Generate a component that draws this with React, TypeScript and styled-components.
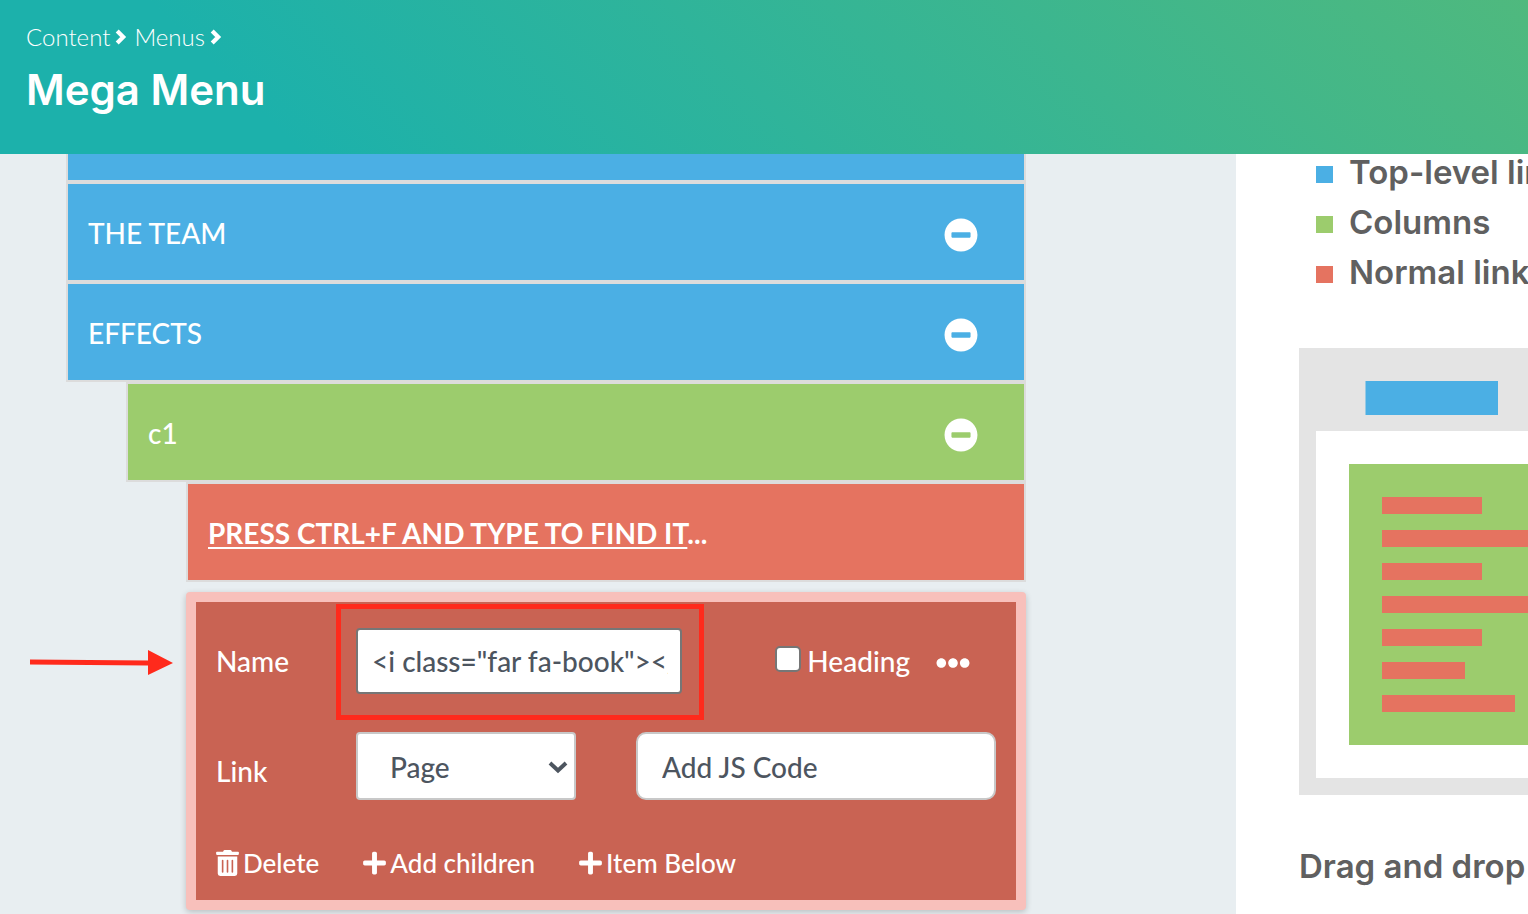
import React from "react";
import styled, { createGlobalStyle } from "styled-components";
import { FaEllipsisH, FaMinusCircle, FaPlus, FaTrashAlt } from "react-icons/fa";

const colors = {
  blue: "#4bafe4",
  green: "#9ccc6d",
  red: "#e57360",
  redDark: "#c96353",
  redLight: "#f8c0bb",
  mark: "#ff2a1c",
  text: "#4d555f",
};

const GlobalStyle = createGlobalStyle`
  *, *::before, *::after { box-sizing: border-box; }
  body {
    margin: 0;
    background: #e8eef1;
    font-family: Lato, sans-serif;
    font-size: 28px;
    font-weight: 500;
    color: #fff;
    overflow-x: hidden;
  }
  input, select, button { font: inherit; }
  ul { list-style: none; margin: 0; padding: 0; }
`;

const Page = styled.div`
  display: flex;
  flex-direction: column;
  min-height: 100vh;
`;

const Header = styled.header`
  height: 154px;
  padding: 20px 26px;
  background: linear-gradient(45deg, #1cb1ab 18%, #4fb97e 100%);
`;

const Breadcrumb = styled.nav`
  display: flex;
  align-items: center;
  height: 32px;
  font-size: 24px;
  font-weight: 300;

  a { color: inherit; text-decoration: none; }
  svg { flex: none; margin: 2px 7px 0 5px; }
`;

const Title = styled.h1`
  margin: 10px 0 0;
  font-family: Inter, sans-serif;
  font-size: 42px;
  line-height: 56px;
  font-weight: 600;
`;

const Body = styled.div`
  display: flex;
  flex: 1;
`;

const Main = styled.main`
  flex: 1;
  min-width: 0;
  padding: 0 210px 0 66px;
`;

const MenuRow = styled.div<{ $color: string; $level?: number }>`
  display: flex;
  align-items: center;
  justify-content: space-between;
  height: 100px;
  margin-left: ${(p) => (p.$level ?? 0) * 60}px;
  padding: 2px 46px 0 20px;
  border: 2px solid #dcdcdc;
  background: ${(p) => p.$color};

  strong { font-weight: 700; }
  u { text-decoration-thickness: 2px; text-underline-offset: 3px; text-decoration-skip-ink: none; }
`;

const RowTail = styled(MenuRow)`
  height: 28px;
  border-top: 0;
`;

const IconButton = styled.button`
  display: flex;
  padding: 4px 0 0;
  border: 0;
  background: none;
  color: #fff;
  font-size: 34px;
`;

const Editor = styled.form`
  position: relative;
  display: flex;
  flex-direction: column;
  gap: 15px;
  margin: 10px 0 4px 120px;
  padding: 14px 20px 17px;
  border: 10px solid ${colors.redLight};
  border-radius: 4px;
  background: ${colors.redDark};
  box-shadow: 0 2px 6px rgba(0, 0, 0, 0.2);
`;

const Arrow = styled.svg`
  position: absolute;
  left: -168px;
  top: 46px;
`;

const Field = styled.div`
  display: flex;
  align-items: center;
  height: 90px;
`;

const FieldLabel = styled.label<{ $low?: boolean }>`
  width: 140px;
  padding-top: ${(p) => (p.$low ? 10 : 0)}px;
`;

const Marked = styled.div`
  position: relative;
  width: 326px;

  &::after {
    content: "";
    position: absolute;
    inset: -24px -22px -26px -20px;
    border: 5px solid ${colors.mark};
    pointer-events: none;
  }
`;

const TextInput = styled.input`
  display: block;
  width: 100%;
  height: 66px;
  padding: 0 12px 0 14px;
  border: 2px solid #767676;
  border-radius: 4px;
  background: #fff;
  color: ${colors.text};
`;

const CodeInput = styled(TextInput)`
  flex: 1;
  width: auto;
  min-width: 0;
  height: 68px;
  margin-left: 60px;
  padding: 2px 24px 0;
  border-color: #c8c8c8;
  border-radius: 10px;
`;

const SelectWrap = styled.div`
  position: relative;
  width: 220px;

  svg { position: absolute; right: 8px; top: 28px; pointer-events: none; }
`;

const Select = styled.select`
  appearance: none;
  display: block;
  width: 100%;
  height: 68px;
  padding: 2px 32px 0;
  border: 2px solid #c8c8c8;
  border-radius: 4px;
  background: #fff;
  color: ${colors.text};
`;

const Check = styled.label`
  display: flex;
  align-items: center;
  gap: 6px;
  margin: 0 26px 0 auto;

  & + button { margin-right: 26px; }
`;

const Checkbox = styled.input`
  appearance: none;
  width: 26px;
  height: 26px;
  margin: 0 0 4px;
  border: 2px solid #767676;
  border-radius: 5px;
  background: #fff;
`;

const Actions = styled.div`
  display: flex;
  gap: 44px;
  margin-top: 17px;
  height: 40px;
`;

const Action = styled.button`
  display: flex;
  align-items: center;
  gap: 4px;
  padding: 0;
  border: 0;
  background: none;
  color: #fff;
  font-size: 26px;

  svg { width: 23px; }
`;

const Sidebar = styled.aside`
  width: 292px;
  flex: none;
  padding-left: 63px;
  overflow: hidden;
  background: #fff;
  color: #606060;
  font-family: Inter, sans-serif;
  font-size: 33px;
  font-weight: 600;
  white-space: nowrap;

  p { margin: 46px 0 0; line-height: 50px; }
  > svg { display: block; margin-top: 51px; }
`;

const Legend = styled.ul`
  margin-top: -7px;
  padding-left: 17px;
`;

const LegendItem = styled.li<{ $color: string }>`
  display: flex;
  align-items: center;
  gap: 16px;
  height: 50px;

  &::before {
    content: "";
    width: 17px;
    height: 17px;
    flex: none;
    margin-top: 4px;
    background: ${(p) => p.$color};
  }
`;

const linkBars = [100, 200, 100, 200, 100, 83, 133];

const Chevron = () => (
  <svg width="12" height="16" viewBox="0 0 12 16" aria-hidden="true">
    <path d="M2.200 2 8.200 8 2.200 14" fill="none" stroke="currentColor" strokeWidth="4.200" />
  </svg>
);

export default function App() {
  return (
    <Page>
      <GlobalStyle />
      <Header>
        <Breadcrumb aria-label="Breadcrumb">
          <a href="#content">Content</a>
          <Chevron />
          <a href="#menus">Menus</a>
          <Chevron />
        </Breadcrumb>
        <Title>Mega Menu</Title>
      </Header>
      <Body>
        <Main>
          <RowTail $color={colors.blue} />
          <MenuRow $color={colors.blue}>
            THE TEAM
            <IconButton aria-label="Collapse THE TEAM"><FaMinusCircle /></IconButton>
          </MenuRow>
          <MenuRow $color={colors.blue}>
            EFFECTS
            <IconButton aria-label="Collapse EFFECTS"><FaMinusCircle /></IconButton>
          </MenuRow>
          <MenuRow $color={colors.green} $level={1}>
            c1
            <IconButton aria-label="Collapse c1"><FaMinusCircle /></IconButton>
          </MenuRow>
          <MenuRow $color={colors.red} $level={2}>
            <strong><u>PRESS CTRL+F AND TYPE TO FIND IT</u>...</strong>
          </MenuRow>
          <Editor onSubmit={(e) => e.preventDefault()}>
            <Arrow width="146" height="28" viewBox="0 0 146 28" aria-hidden="true">
              <path d="M2 11.4 120 12.4V2L145 15 120 27V17.4L2 16.6Z" fill={colors.mark} />
            </Arrow>
            <Field>
              <FieldLabel htmlFor="name">Name</FieldLabel>
              <Marked>
                <TextInput id="name" defaultValue={'<i class="far fa-book"></i>'} />
              </Marked>
              <Check>
                <Checkbox type="checkbox" />
                Heading
              </Check>
              <IconButton type="button" aria-label="More options"><FaEllipsisH /></IconButton>
            </Field>
            <Field>
              <FieldLabel htmlFor="link" $low>Link</FieldLabel>
              <SelectWrap>
                <Select id="link"><option>Page</option></Select>
                <svg width="20" height="14" viewBox="0 0 20 14" aria-hidden="true">
                  <path d="M2 3 10 10.500 18 3" fill="none" stroke={colors.text} strokeWidth="4" />
                </svg>
              </SelectWrap>
              <CodeInput aria-label="Link target" defaultValue="Add JS Code" />
            </Field>
            <Actions>
              <Action type="button"><FaTrashAlt />Delete</Action>
              <Action type="button"><FaPlus />Add children</Action>
              <Action type="button"><FaPlus />Item Below</Action>
            </Actions>
          </Editor>
        </Main>
        <Sidebar>
          <Legend>
            <LegendItem $color={colors.blue}>Top-level links</LegendItem>
            <LegendItem $color={colors.green}>Columns</LegendItem>
            <LegendItem $color={colors.red}>Normal links</LegendItem>
          </Legend>
          <svg width="400" height="447" role="img" aria-label="Menu structure diagram">
            <rect width="400" height="447" fill="#e4e4e4" />
            <rect x="66.500" y="33" width="132.500" height="34" fill={colors.blue} />
            <rect x="17" y="83" width="383" height="347" fill="#fff" />
            <rect x="50" y="116" width="350" height="281" fill={colors.green} />
            {linkBars.map((w, i) => (
              <rect key={i} x="83" y={149 + i * 33} width={w} height="17" fill={colors.red} />
            ))}
          </svg>
          <p>Drag and drop</p>
        </Sidebar>
      </Body>
    </Page>
  );
}
